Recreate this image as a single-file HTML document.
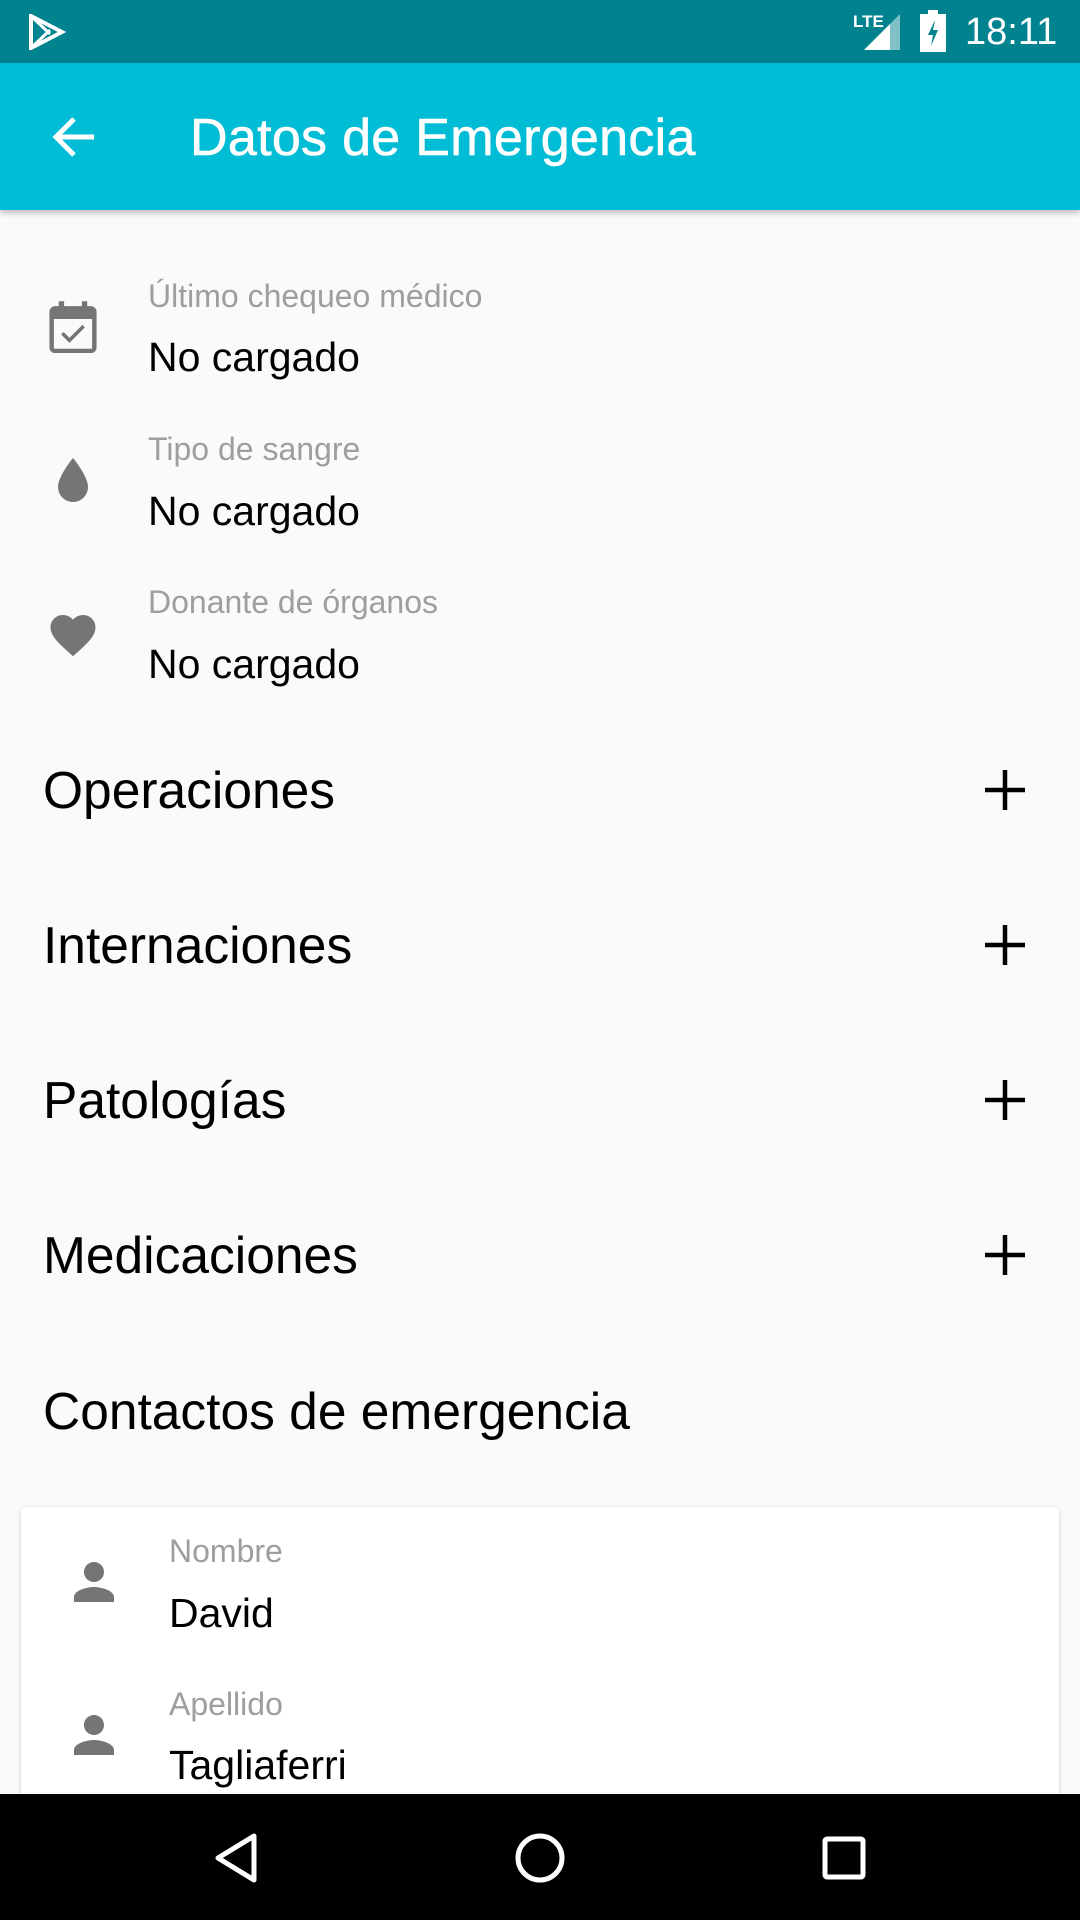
<!DOCTYPE html>
<html><head><meta charset="utf-8"><style>
*{margin:0;padding:0;box-sizing:border-box}
body{width:1080px;height:1920px;background:#fafafa;font-family:"Liberation Sans",Roboto,sans-serif;position:relative;overflow:hidden}
.abs{position:absolute}
.sb{left:0;top:0;width:1080px;height:63px;background:#00838f}
.tb{left:0;top:63px;width:1080px;height:147px;background:#00bcd4;box-shadow:0 3px 6px rgba(0,0,0,.25)}
.title{left:190px;top:108px;color:#fff;font-size:52px;line-height:60px;letter-spacing:.3px;-webkit-text-stroke:.6px #fff}
.lbl{color:#9e9e9e;font-size:32px;line-height:36px}
.val{color:#000;font-size:41px;line-height:46px}
.hd{left:43px;color:#000;font-size:51.5px;line-height:60px}
.plus{left:983px;width:44px;height:44px}
.card{left:21px;top:1507px;width:1038px;height:400px;background:#fff;border-radius:5px;box-shadow:0 1px 4px rgba(0,0,0,.2)}
.nav{left:0;top:1794px;width:1080px;height:126px;background:#000}
</style></head><body>
<div class="abs sb">
<svg class="abs" style="left:28px;top:14px" width="38" height="36" viewBox="0 0 38 36"><path d="M3 2 L34 18 L3 34 Z" fill="none" stroke="#fff" stroke-width="4"/><path d="M3 2 L22 20 M3 34 L22 16" stroke="#fff" stroke-width="3"/></svg>
<div class="abs" style="left:853px;top:12px;color:#fff;font-size:17px;font-weight:bold">LTE</div>
<svg class="abs" style="left:862px;top:14px" width="40" height="36"><path d="M38 0 L38 36 L2 36 Z" fill="#fff" opacity=".5"/><path d="M28 10 L28 36 L2 36 Z" fill="#fff"/></svg>
<svg class="abs" style="left:920px;top:10px" width="26" height="42"><rect x="0" y="4" width="26" height="38" fill="#fff"/><rect x="8" y="0" width="10" height="5" fill="#fff"/><path d="M15 10 L8 25 L13 25 L11 36 L18 20 L13 20 Z" fill="#00838f"/></svg>
<div class="abs" style="left:965px;top:10px;color:#fff;font-size:38px;line-height:44px">18:11</div>
</div>
<div class="abs tb">
<svg class="abs" style="left:50px;top:52px" width="48" height="44" viewBox="0 0 48 44"><path d="M44 22 H6 M24 4 L6 22 L24 40" fill="none" stroke="#fff" stroke-width="5"/></svg>
</div>
<div class="abs title">Datos de Emergencia</div>

<svg class="abs" style="left:49px;top:301px" width="48" height="52" viewBox="0 0 54 58"><rect x="3" y="8" width="48" height="48" rx="4" fill="none" stroke="#757575" stroke-width="5"/><rect x="3" y="8" width="48" height="12" fill="#757575"/><rect x="11" y="0" width="6" height="12" fill="#757575"/><rect x="37" y="0" width="6" height="12" fill="#757575"/><path d="M15 36 L23 44 L39 28" fill="none" stroke="#757575" stroke-width="4"/></svg>
<div class="abs lbl" style="left:148px;top:278px">Último chequeo médico</div>
<div class="abs val" style="left:148px;top:334px">No cargado</div>

<svg class="abs" style="left:56px;top:456px" width="34" height="48" viewBox="0 0 34 48"><path d="M17 2 C17 2 2 20 2 31 A15 15 0 0 0 32 31 C32 20 17 2 17 2Z" fill="#757575"/></svg>
<div class="abs lbl" style="left:148px;top:431px">Tipo de sangre</div>
<div class="abs val" style="left:148px;top:488px">No cargado</div>

<svg class="abs" style="left:46px;top:608px" width="54" height="50" viewBox="0 0 24 22"><path d="M12 21.35l-1.45-1.32C5.4 15.36 2 12.28 2 8.5 2 5.42 4.42 3 7.5 3c1.74 0 3.41.81 4.5 2.09C13.09 3.81 14.76 3 16.5 3 19.58 3 22 5.42 22 8.5c0 3.78-3.4 6.86-8.55 11.54L12 21.35z" fill="#757575"/></svg>
<div class="abs lbl" style="left:148px;top:584px">Donante de órganos</div>
<div class="abs val" style="left:148px;top:641px">No cargado</div>

<div class="abs hd" style="top:760px">Operaciones</div>
<div class="abs hd" style="top:915px">Internaciones</div>
<div class="abs hd" style="top:1070px">Patologías</div>
<div class="abs hd" style="top:1225px">Medicaciones</div>
<div class="abs hd" style="top:1381px">Contactos de emergencia</div>
<svg class="abs plus" style="top:768px" viewBox="0 0 44 44"><path d="M22 2V42M2 22H42" stroke="#000" stroke-width="4.5"/></svg>
<svg class="abs plus" style="top:923px" viewBox="0 0 44 44"><path d="M22 2V42M2 22H42" stroke="#000" stroke-width="4.5"/></svg>
<svg class="abs plus" style="top:1078px" viewBox="0 0 44 44"><path d="M22 2V42M2 22H42" stroke="#000" stroke-width="4.5"/></svg>
<svg class="abs plus" style="top:1233px" viewBox="0 0 44 44"><path d="M22 2V42M2 22H42" stroke="#000" stroke-width="4.5"/></svg>

<div class="abs card"></div>
<svg class="abs" style="left:64px;top:1552px" width="60" height="60" viewBox="0 0 24 24"><path d="M12 12c2.21 0 4-1.79 4-4s-1.79-4-4-4-4 1.79-4 4 1.79 4 4 4zm0 2c-2.67 0-8 1.34-8 4v2h16v-2c0-2.66-5.33-4-8-4z" fill="#757575"/></svg>
<div class="abs lbl" style="left:169px;top:1533px">Nombre</div>
<div class="abs val" style="left:169px;top:1590px">David</div>
<svg class="abs" style="left:64px;top:1705px" width="60" height="60" viewBox="0 0 24 24"><path d="M12 12c2.21 0 4-1.79 4-4s-1.79-4-4-4-4 1.79-4 4 1.79 4 4 4zm0 2c-2.67 0-8 1.34-8 4v2h16v-2c0-2.66-5.33-4-8-4z" fill="#757575"/></svg>
<div class="abs lbl" style="left:169px;top:1686px">Apellido</div>
<div class="abs val" style="left:169px;top:1742px">Tagliaferri</div>

<div class="abs nav">
<svg class="abs" style="left:212px;top:38px" width="48" height="52" viewBox="0 0 48 52"><path d="M42 4 L6 26 L42 48 Z" fill="none" stroke="#fff" stroke-width="5" stroke-linejoin="round"/></svg>
<svg class="abs" style="left:514px;top:38px" width="52" height="52"><circle cx="26" cy="26" r="22" fill="none" stroke="#fff" stroke-width="5"/></svg>
<svg class="abs" style="left:822px;top:42px" width="44" height="44"><rect x="3" y="3" width="38" height="38" rx="2" fill="none" stroke="#fff" stroke-width="5"/></svg>
</div>
</body></html>
